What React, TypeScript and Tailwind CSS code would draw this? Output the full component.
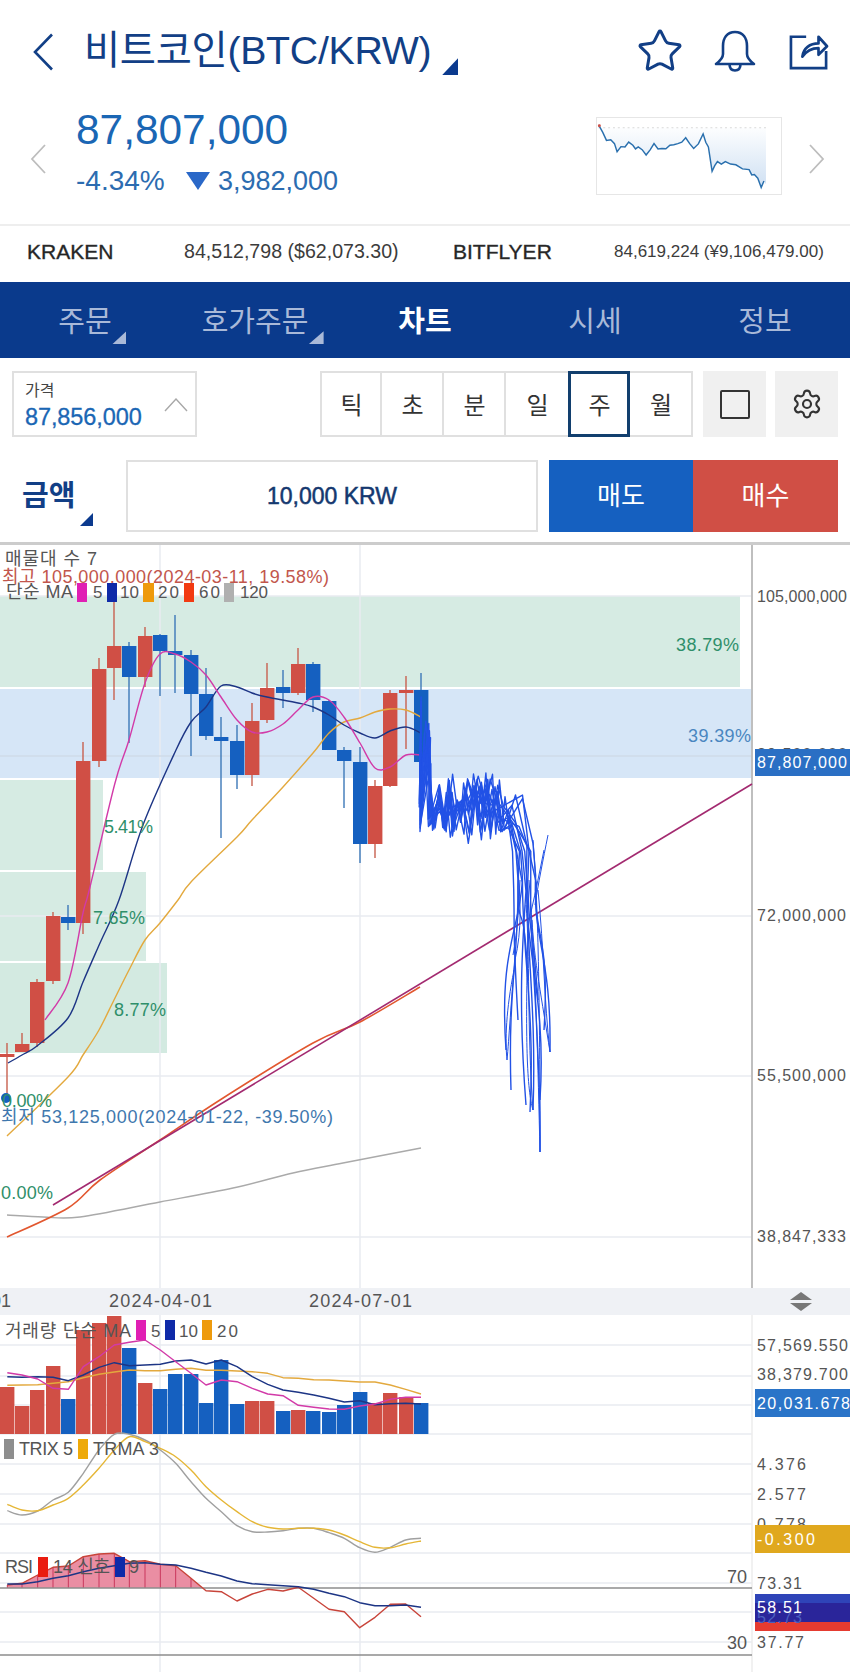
import { Settings, Star } from 'lucide-react';

const NAVY = '#123f86';
const RED = '#d04f45';
const BLUE = '#1560c0';

// x, body top, body bottom, wick top, wick bottom, up?
const candles: [number, number, number, number, number, boolean][] = [
  [7, 1054, 1057, 1043, 1098, true],
  [22, 1044, 1052, 1033, 1052, true],
  [37, 982, 1043, 979, 1047, true],
  [53, 916, 981, 912, 984, true],
  [68, 917, 923, 905, 930, false],
  [83, 761, 923, 742, 934, true],
  [99, 669, 761, 658, 767, true],
  [114, 646, 668, 597, 700, true],
  [129, 646, 677, 642, 743, false],
  [145, 636, 677, 627, 687, true],
  [160, 635, 651, 634, 696, false],
  [175, 651, 655, 615, 693, false],
  [191, 655, 694, 650, 756, false],
  [206, 694, 736, 668, 740, false],
  [221, 737, 741, 717, 838, false],
  [237, 741, 775, 725, 789, false],
  [252, 721, 775, 703, 786, true],
  [267, 688, 720, 663, 723, true],
  [283, 687, 693, 670, 708, false],
  [298, 664, 693, 648, 695, true],
  [313, 664, 700, 662, 712, false],
  [329, 701, 750, 700, 750, false],
  [344, 750, 761, 747, 808, false],
  [360, 762, 844, 747, 863, false],
  [375, 786, 844, 780, 858, true],
  [390, 693, 786, 690, 787, true],
  [406, 690, 693, 676, 749, true],
  [421, 690, 762, 673, 770, false],
];

const volumes = [1387, 1406, 1390, 1366, 1399, 1330, 1323, 1316, 1348, 1383, 1389, 1374, 1374, 1403, 1360, 1404, 1401, 1401, 1411, 1410, 1411, 1412, 1405, 1392, 1403, 1393, 1397, 1403];

const ma5 = '45,1020 68,983 83,913 90,887 115,783 129,740 145,683 160,654 175,654 191,662 206,675 221,697 237,720 252,732 267,732 283,724 298,710 313,697 329,700 344,717 360,743 375,768 390,767 406,755 421,755';
const ma10 = '8,1063 22,1055 37,1046 68,1018 83,982 100,943 119,900 143,825 176,750 191,722 206,707 221,686 237,687 252,693 267,697 298,703 313,707 329,715 344,725 360,733 375,738 390,731 406,727 421,733';
const ma20 = '7,1136 68,1077 83,1055 99,1030 114,1000 129,970 145,940 160,923 178,900 191,882 237,837 252,820 283,787 313,753 329,733 344,722 360,718 375,712 390,709 406,710 421,717';
const ma60 = '7,1237 68,1208 100,1180 160,1140 220,1100 313,1043 360,1022 420,987';
const ma120 = '7,1215 43,1217 80,1217 160,1202 233,1188 293,1173 343,1163 421,1148';

const xs = [22, 66, 113, 159, 205, 250, 297, 343, 388, 435, 481, 527, 573, 618, 664, 711, 757, 803, 849, 895, 941, 987, 1033, 1079, 1125, 1171, 1217, 1263];
const sub = (ys: number[]) => ys.map((y, i) => `${(xs[i] / 3).toFixed(1)},${(1280 + y / 3).toFixed(1)}`).join(' ');

const volMa5 = sub([278, 285, 297, 325, 328, 260, 230, 195, 187, 180, 210, 245, 280, 315, 300, 305, 325, 342, 347, 376, 382, 387, 388, 378, 372, 358, 352, 352]);
const volMa10 = sub([290, 292, 290, 292, 302, 285, 262, 248, 257, 255, 253, 243, 240, 252, 240, 260, 290, 313, 330, 337, 345, 355, 366, 362, 374, 371, 370, 372]);
const volMa20 = sub([316, 315, 314, 310, 305, 293, 283, 276, 270, 272, 272, 268, 265, 271, 271, 273, 275, 280, 293, 295, 299, 300, 303, 306, 306, 315, 328, 342]);
const trix = sub([692, 705, 693, 660, 637, 580, 510, 463, 463, 480, 510, 550, 605, 655, 695, 737, 755, 756, 752, 745, 745, 758, 775, 803, 817, 802, 780, 775]);
const trma = sub([673, 690, 692, 675, 655, 615, 565, 510, 470, 485, 505, 530, 570, 620, 660, 695, 725, 742, 747, 745, 745, 750, 765, 785, 802, 803, 792, 783]);
const rsiY = [915, 910, 885, 862, 858, 830, 822, 820, 845, 842, 853, 857, 895, 932, 935, 963, 942, 928, 933, 922, 955, 988, 995, 1043, 1012, 973, 972, 1010];
const rsi = sub(rsiY);
const signal = sub([912, 912, 905, 895, 887, 875, 865, 857, 850, 848, 853, 855, 865, 877, 888, 903, 911, 914, 917, 920, 928, 940, 950, 968, 977, 977, 975, 982]);
const rsiFill = `7,1588 ${sub(rsiY.slice(0, 13))} 203,1588`;

// catmull-rom through the given points
function smooth(points: string) {
  const p = points.split(' ').map((s) => s.split(',').map(Number));
  let d = `M${p[0][0]} ${p[0][1]}`;
  for (let i = 0; i < p.length - 1; i++) {
    const a = p[Math.max(i - 1, 0)];
    const b = p[i];
    const c = p[i + 1];
    const e = p[Math.min(i + 2, p.length - 1)];
    d += ` C${(b[0] + (c[0] - a[0]) / 6).toFixed(1)} ${(b[1] + (c[1] - a[1]) / 6).toFixed(1)} ${(c[0] - (e[0] - b[0]) / 6).toFixed(1)} ${(c[1] - (e[1] - b[1]) / 6).toFixed(1)} ${c[0]} ${c[1]}`;
  }
  return d;
}

// forecast lines, same seed every render
function seeded(seed: number) {
  let s = seed;
  return () => {
    s = (s * 16807) % 2147483647;
    return s / 2147483647;
  };
}

const fanEnds: [number, number, number][] = [
  [506, 1050, 1], [511, 1090, 1], [518, 1020, 0], [526, 1105, 2], [530, 1112, 2],
  [533, 1110, 3], [540, 1152, 4], [540, 1100, 3], [550, 1052, 5], [528, 980, 1], [538, 1000, 4], [544, 1030, 5],
];

const fanPaths = fanEnds.map(([ex, ey, k], i) => {
  const r = seeded(97 + i * 131);
  let d = `M${421 + r() * 8} ${692 + r() * 60}`;
  d += ` L${418 + r() * 10} ${790 + r() * 42} L${424 + r() * 8} ${720 + r() * 45} L${428 + r() * 8} ${815 + r() * 18}`;
  let x = 436 + r() * 4;
  while (x < 500) {
    const t = (x - 430) / 75;
    const top = 790 - 22 * Math.sin(Math.min(t * 2, 1) * 1.57) + 18 * Math.max(0, t - 0.5);
    const bottom = 832 + 12 * Math.sin(t * 3);
    d += ` L${x.toFixed(1)} ${(top + r() * (bottom - top) * 0.55).toFixed(1)}`;
    x += 3 + r() * 5;
    d += ` L${x.toFixed(1)} ${(top + (bottom - top) * (0.4 + r() * 0.6)).toFixed(1)}`;
    x += 3 + r() * 5;
  }
  const sx = 505 + k * 3.5;
  d += ` L${sx} ${795 + r() * 40} L${sx + 6 + r() * 6} ${838 + r() * 16} L${sx + 8 + r() * 6} ${875 + r() * 25}`;
  d += ` C${sx + 10} ${930 + r() * 30} ${ex + (r() - 0.5) * 16} ${ey - 100} ${ex} ${ey}`;
  return d;
});

const tailPaths = [
  'M517 860 C521 900 522 930 515 960 C511 1000 509 1040 507 1060 C505 1040 506 1010 514 970',
  'M526 905 C530 950 527 1030 533 1110 C527 1090 525 1040 528 930',
  'M533 840 C538 900 540 1000 540 1152 C538 1070 536 970 529 880',
  'M538 890 C544 950 544 1000 550 1052 C542 1000 534 960 532 920',
  'M535 905 C538 885 543 860 548 835',
  'M531 912 C536 890 540 870 544 850',
  'M520 880 C519 900 518 930 513 955',
];

function Tag({ x, y, children, fill = '#555555', len, size = 16 }: { x: number; y: number; children: string; fill?: string; len?: number; size?: number }) {
  return (
    <text x={x} y={y} fontSize={size} fill={fill} textLength={len} lengthAdjust="spacing">
      {children}
    </text>
  );
}

function Corner({ className }: { className: string }) {
  return <span className={`absolute [clip-path:polygon(100%_0,100%_100%,0_100%)] ${className}`} />;
}

const sparkRaw = [[1100, 372], [1108, 395], [1115, 420], [1123, 418], [1130, 430], [1135, 455], [1150, 440], [1157, 425], [1165, 435], [1175, 440], [1190, 465], [1205, 430], [1220, 445], [1235, 435], [1250, 430], [1265, 412], [1280, 445], [1298, 400], [1308, 440], [1315, 515], [1325, 485], [1340, 485], [1360, 495], [1385, 510], [1395, 525], [1408, 565], [1413, 545]];
const sparkNoise = seeded(4242);
const sparkPts = sparkRaw
  .flatMap(([x, y], i) => {
    const next = sparkRaw[i + 1];
    if (!next || next[0] - x < 10) return [`${(x / 1.845).toFixed(1)},${(y / 3).toFixed(1)}`];
    const midX = (x + next[0]) / 2 / 1.845;
    const midY = (y + next[1]) / 2 / 3 + (sparkNoise() - 0.5) * 6;
    return [`${(x / 1.845).toFixed(1)},${(y / 3).toFixed(1)}`, `${midX.toFixed(1)},${midY.toFixed(1)}`];
  })
  .join(' ');

export default function App() {
  return (
    <div className="w-[850px] h-[1672px] overflow-hidden bg-white [font-family:'Liberation_Sans','Noto_Sans_CJK_KR',sans-serif]">
      {/* Title */}
      <header className="h-[100px] flex items-center pl-[32px] pr-[21px] pt-[2px]">
        <svg viewBox="0 0 22 38" className="w-[22px] h-[38px] mt-[1px]" fill="none" stroke={NAVY} strokeWidth="2.6">
          <path d="M20 1.5 3 19l17 17.5" />
        </svg>
        <h1 className="relative ml-[30px] text-[39.3px] leading-none tracking-[-0.3px] text-[#123f86]">
          비트코인(BTC/KRW)
          <Corner className="left-[358px] top-[27px] w-[16px] h-[17px] bg-[#0b3a8e]" />
        </h1>
        <div className="ml-auto flex items-center">
          <Star size={48} strokeWidth={1.5} color={NAVY} className="mr-[30px]" />
          <svg viewBox="0 0 42 42" className="w-[42px] h-[42px] mr-[33px]" fill="none" stroke={NAVY} strokeWidth="2.6" strokeLinejoin="round">
            <path d="M21 2c-8 0-12 6-12 14v8c0 4-3 7-7 10h38c-4-3-7-6-7-10v-8c0-8-4-14-12-14Z" />
            <path d="M15.5 34c0 4 2 6.5 5.5 6.5s5.5-2.500 5.500-6.500" />
          </svg>
          <svg viewBox="0 0 42 40" className="w-[40px] h-[38px]" fill="none" stroke={NAVY} strokeWidth="2.8">
            <path d="M18 5H2v33h37V20" />
            <path d="M14 26c1-9 8-14 17-14V5l9 10-9 9v-7c-7 0-12 2-17 9Z" strokeLinejoin="round" />
          </svg>
        </div>
      </header>

      {/* Price */}
      <section className="relative h-[124px] pl-[76px]">
        <svg viewBox="0 0 16 30" className="absolute left-[30px] top-[44px] w-[16px] h-[30px]" fill="none" stroke="#bdbdbd" strokeWidth="1.8">
          <path d="M15 1 2 15l13 14" />
        </svg>
        <div className="pt-[6px] text-[42.4px] leading-[48px] text-[#1a66b4]">87,807,000</div>
        <div className="mt-[12px] flex items-center text-[28px] leading-[30px] text-[#2c6cb0]">
          <span className="w-[110px]">-4.34%</span>
          <span className="w-[24px] h-[18px] mr-[8px] bg-[#2a68c8] [clip-path:polygon(0_0,100%_0,50%_100%)]" />
          <span className="text-[27px]">3,982,000</span>
        </div>
        <svg viewBox="596 117 186 78" className="absolute left-[596px] top-[17px] w-[186px] h-[78px] border border-[#e6e6e6]">
          <defs>
            <linearGradient id="spark" x1="0" y1="0" x2="0" y2="1">
              <stop offset="0" stopColor="#ffffff" />
              <stop offset="1" stopColor="#cfe0f3" />
            </linearGradient>
          </defs>
          <polygon points={`596,127 768,127 768,185 ${sparkPts.split(' ').reverse().join(' ')}`} fill="url(#spark)" />
          <line x1="596" y1="127" x2="769" y2="127" stroke="#d8d8d8" strokeDasharray="2 3" />
          <polyline points={sparkPts} fill="none" stroke="#2a70ae" strokeWidth="1.5" />
          <circle cx="597" cy="125" r="1.5" fill="#d04f45" />
        </svg>
        <svg viewBox="0 0 16 30" className="absolute left-[809px] top-[44px] w-[16px] h-[30px]" fill="none" stroke="#bdbdbd" strokeWidth="1.8">
          <path d="M1 1l13 14L1 29" />
        </svg>
      </section>

      {/* Exchange prices */}
      <section className="h-[59px] pb-[6px] border-t-2 border-[#eeeeee] flex items-center pl-[27px] text-[#3c3c3c]">
        <span className="w-[157px] text-[21px] [-webkit-text-stroke:0.4px_#3c3c3c] text-[#222222]">KRAKEN</span>
        <span className="w-[269px] text-[19.6px]">84,512,798 ($62,073.30)</span>
        <span className="w-[161px] text-[21px] [-webkit-text-stroke:0.4px_#3c3c3c] text-[#222222]">BITFLYER</span>
        <span className="text-[17px]">84,619,224 (¥9,106,479.00)</span>
      </section>

      {/* Tabs */}
      <nav className="h-[76px] mt-[-1px] pt-[6px] bg-[#0a3a8c] grid grid-cols-5 text-[29px] text-[#a9b9d8]">
        <div className="flex items-center justify-center">
          <span className="relative">
            주문
            <Corner className="left-[54px] top-[30px] w-[14px] h-[13px] bg-[#a9b9d8]" />
          </span>
        </div>
        <div className="flex items-center justify-center">
          <span className="relative">
            호가주문
            <Corner className="left-[107px] top-[30px] w-[15px] h-[13px] bg-[#a9b9d8]" />
          </span>
        </div>
        <div className="flex items-center justify-center font-bold text-white">차트</div>
        <div className="flex items-center justify-center">시세</div>
        <div className="flex items-center justify-center">정보</div>
      </nav>

      {/* Chart controls */}
      <section className="h-[102px] flex pt-[13px] pl-[12px] pr-[12px]">
        <div className="relative w-[186px] h-[66px] border-2 border-[#e0e0e0] pl-[11px] pt-[9px]">
          <div className="text-[16px] leading-[18px] text-[#444444]">가격</div>
          <div className="mt-[5px] text-[23.5px] leading-[24px] text-[#1a66b4] tracking-[-0.1px] [-webkit-text-stroke:0.3px_#1a66b4]">87,856,000</div>
          <svg viewBox="0 0 24 14" className="absolute left-[150px] top-[25px] w-[24px] h-[14px]" fill="none" stroke="#a8a8a8" strokeWidth="1.4">
            <path d="M1 13 12 1l11 12" />
          </svg>
        </div>
        <div className="ml-[123px] flex h-[66px] border-2 border-[#e0e0e0] text-[24px] text-[#333333]">
          <div className="w-[60px] pt-[3px] flex items-center justify-center border-r-2 border-[#e0e0e0]">틱</div>
          <div className="w-[62px] pt-[3px] flex items-center justify-center border-r-2 border-[#e0e0e0]">초</div>
          <div className="w-[62px] pt-[3px] flex items-center justify-center border-r-2 border-[#e0e0e0]">분</div>
          <div className="w-[62px] pt-[3px] flex items-center justify-center">일</div>
          <div className="w-[62px] -my-[2px] pt-[3px] flex items-center justify-center border-[3px] border-[#123f6e]">주</div>
          <div className="w-[61px] pt-[3px] flex items-center justify-center">월</div>
        </div>
        <div className="ml-[10px] w-[63px] h-[66px] bg-[#f0f0f0] flex items-center justify-center">
          <span className="block w-[30px] h-[29px] border-2 border-[#333333] rounded-[2px]" />
        </div>
        <div className="ml-[9px] w-[63px] h-[66px] bg-[#f0f0f0] flex items-center justify-center">
          <Settings size={32} strokeWidth={1.6} color="#333333" />
        </div>
      </section>

      {/* Amount */}
      <section className="h-[82px] flex items-start pl-[22px] pr-[12px]">
        <div className="relative w-[104px] h-[72px] pt-[20px] text-[29px] leading-[32px] font-bold text-[#123f86]">
          금액
          <Corner className="left-[58px] top-[53px] w-[13px] h-[13px] bg-[#0b3a8e]" />
        </div>
        <div className="w-[412px] h-[72px] border-2 border-[#e0e0e0] flex items-center justify-center text-[23px] text-[#14386f] font-medium [-webkit-text-stroke:0.5px_#14386f]">
          10,000 KRW
        </div>
        <div className="ml-[11px] w-[144px] h-[72px] bg-[#1560c0] text-white text-[26px] flex items-center justify-center">매도</div>
        <div className="w-[145px] h-[72px] bg-[#d04f45] text-white text-[26px] flex items-center justify-center">매수</div>
      </section>

      {/* Chart */}
      <div className="h-[1130px] border-t-[3px] border-[#cccccc]">
        <svg viewBox="0 545 850 1127" className="block w-[850px] h-[1127px]">
          {/* panel bands */}
          <rect x="0" y="596" width="740" height="91" fill="#d6ebe3" />
          <rect x="0" y="689" width="751" height="89" fill="#d6e6f7" />
          <rect x="0" y="780" width="103" height="90" fill="#d6ebe3" />
          <rect x="0" y="872" width="146" height="89" fill="#d6ebe3" />
          <rect x="0" y="963" width="167" height="90" fill="#d3eae1" />

          {/* grid */}
          <g stroke="#e9ebf0" strokeWidth="1.5">
            <line x1="160" y1="545" x2="160" y2="1672" />
            <line x1="360" y1="545" x2="360" y2="1672" />
            <line x1="0" y1="596" x2="752" y2="596" />
            {[916, 1076, 1237, 1345, 1376, 1405, 1434, 1464, 1494, 1524, 1553, 1583, 1612, 1642].map((y) => (
              <line key={y} x1="0" y1={y} x2="752" y2={y} />
            ))}
          </g>
          <line x1="0" y1="756" x2="751" y2="756" stroke="#cfdbe8" strokeWidth="1.5" />
          <rect x="0" y="1288" width="850" height="27" fill="#eff1f5" />
          <line x1="752" y1="545" x2="752" y2="1288" stroke="#bfbfbf" strokeWidth="2" />
          <line x1="752" y1="1315" x2="752" y2="1672" stroke="#ececec" strokeWidth="1.5" />

          {/* candles */}
          {candles.map(([x, top, bottom, wt, wb, up]) => (
            <g key={x}>
              <line x1={x} y1={wt} x2={x} y2={wb} stroke={up ? '#c8604f' : '#3c78b8'} strokeWidth="1.4" />
              <rect x={x - 7} y={top} width="14.4" height={bottom - top} fill={up ? RED : BLUE} />
            </g>
          ))}

          {/* moving averages */}
          <g fill="none" strokeWidth="1.4" strokeLinejoin="round">
            <path d={smooth(ma20)} stroke="#e3a93e" />
            <path d={smooth(ma10)} stroke="#1d3585" />
            <path d={smooth(ma5)} stroke="#d23aa8" />
            <path d={smooth(ma120)} stroke="#aaaaaa" />
            <path d={smooth(ma60)} stroke="#e2572f" strokeWidth="1.6" />
            <line x1="53" y1="1205" x2="752" y2="784" stroke="#a32a70" strokeWidth="1.6" />
          </g>

          {/* forecast */}
          <g fill="none" stroke="#2252e6" strokeWidth="1.4" strokeLinejoin="round">
            {fanPaths.map((d, i) => (
              <path key={i} d={d} />
            ))}
            {tailPaths.map((d, i) => (
              <path key={i} d={d} strokeWidth="1" />
            ))}
          </g>
          <circle cx="6" cy="1098" r="5" fill="#1560c0" />

          {/* main legend */}
          <Tag x={5} y={565} size={18} len={92}>매물대 수 7</Tag>
          <Tag x={2} y={583} size={18} len={327} fill="#c2564c">최고 105,000,000(2024-03-11, 19.58%)</Tag>
          <Tag x={6} y={598} size={18} len={67}>단순 MA</Tag>
          <rect x="77" y="583" width="10" height="19" fill="#e01fb4" />
          <Tag x={93} y={598} size={17}>5</Tag>
          <rect x="107" y="583" width="10" height="19" fill="#0f2aa8" />
          <Tag x={120} y={598} size={17}>10</Tag>
          <rect x="143" y="583" width="11" height="19" fill="#ee9a0c" />
          <Tag x={158} y={598} size={17} len={21}>20</Tag>
          <rect x="184" y="583" width="10" height="19" fill="#f23a12" />
          <Tag x={199} y={598} size={17} len={21}>60</Tag>
          <rect x="224" y="583" width="10" height="19" fill="#b0b0b0" />
          <Tag x={240} y={598} size={17} len={28}>120</Tag>

          {/* band labels */}
          <Tag x={104} y={833} size={18} len={49} fill="#2f8f6a">5.41%</Tag>
          <Tag x={93} y={924} size={18} len={52} fill="#2f8f6a">7.65%</Tag>
          <Tag x={114} y={1016} size={18} len={52} fill="#2f8f6a">8.77%</Tag>
          <Tag x={2} y={1107} size={18} len={50} fill="#2f8f6a">0.00%</Tag>
          <Tag x={1} y={1123} size={18} len={332} fill="#3f78ae">최저 53,125,000(2024-01-22, -39.50%)</Tag>
          <Tag x={1} y={1199} size={18} len={52} fill="#2f8f6a">0.00%</Tag>
          <Tag x={676} y={651} size={18} len={63} fill="#2f8f6a">38.79%</Tag>
          <Tag x={688} y={742} size={18} len={63} fill="#4a86c0">39.39%</Tag>

          {/* price axis */}
          <Tag x={757} y={602} len={90}>105,000,000</Tag>
          <Tag x={757} y={760} len={90}>89,500,000</Tag>
          <rect x="755" y="749" width="95" height="27" fill="#2a6fc4" />
          <Tag x={757} y={768} len={90} fill="#ffffff">87,807,000</Tag>
          <Tag x={757} y={921} len={89}>72,000,000</Tag>
          <Tag x={757} y={1081} len={89}>55,500,000</Tag>
          <Tag x={757} y={1242} len={89}>38,847,333</Tag>

          {/* dates */}
          <Tag x={-9} y={1307} size={18}>01</Tag>
          <Tag x={109} y={1307} size={18} len={103}>2024-04-01</Tag>
          <Tag x={309} y={1307} size={18} len={103}>2024-07-01</Tag>
          <path d="M801 1292l11 8h-22zM790 1303h22l-11 8z" fill="#777777" />

          {/* volume */}
          {candles.map(([x, , , , , up], i) => (
            <rect key={x} x={x - 7} y={volumes[i]} width="14.4" height={1434 - volumes[i]} fill={up ? RED : BLUE} />
          ))}
          <g fill="none" strokeWidth="1.4" strokeLinejoin="round">
            <polyline points={volMa20} stroke="#e3a93e" />
            <polyline points={volMa10} stroke="#1d3585" />
            <polyline points={volMa5} stroke="#d23aa8" />
          </g>
          <Tag x={5} y={1337} size={18} len={126}>거래량 단순 MA</Tag>
          <rect x="136" y="1320" width="10" height="20" fill="#e01fb4" />
          <Tag x={151} y={1337} size={17}>5</Tag>
          <rect x="165" y="1320" width="10" height="20" fill="#0f2aa8" />
          <Tag x={179} y={1337} size={17}>10</Tag>
          <rect x="202" y="1320" width="10" height="20" fill="#ee9a0c" />
          <Tag x={217} y={1337} size={17} len={21}>20</Tag>
          <Tag x={757} y={1351} len={91}>57,569.550</Tag>
          <Tag x={757} y={1380} len={91}>38,379.700</Tag>
          <rect x="755" y="1389" width="95" height="28" fill="#2a74c8" />
          <Tag x={757} y={1409} len={93} fill="#ffffff">20,031.678</Tag>

          {/* TRIX */}
          <g fill="none" strokeWidth="1.4" strokeLinejoin="round">
            <path d={smooth(trix)} stroke="#a0a0a0" />
            <path d={smooth(trma)} stroke="#e5b636" />
          </g>
          <rect x="4" y="1439" width="10" height="20" fill="#8e8e8e" />
          <Tag x={19} y={1455} size={18} len={54}>TRIX 5</Tag>
          <rect x="78" y="1439" width="10" height="20" fill="#eeaa0a" />
          <Tag x={93} y={1455} size={18} len={66}>TRMA 3</Tag>
          <Tag x={757} y={1470} len={49}>4.376</Tag>
          <Tag x={757} y={1500} len={49}>2.577</Tag>
          <Tag x={757} y={1530} len={49}>0.778</Tag>
          <rect x="755" y="1525" width="95" height="28" fill="#e0a81e" />
          <Tag x={757} y={1545} len={58} fill="#ffffff">-0.300</Tag>

          {/* RSI */}
          <polygon points={rsiFill} fill="#ea8ea3" />
          {xs.slice(0, 13).map((x, i) => (
            <line key={x} x1={x / 3} y1={1280 + rsiY[i] / 3} x2={x / 3} y2="1588" stroke="#c9375c" strokeWidth="1" />
          ))}
          <line x1="0" y1="1588" x2="752" y2="1588" stroke="#8c8c8c" strokeWidth="1.5" />
          <line x1="0" y1="1655" x2="752" y2="1655" stroke="#8c8c8c" strokeWidth="1.5" />
          <g fill="none" strokeWidth="1.4" strokeLinejoin="round">
            <polyline points={rsi} stroke="#c8443a" />
            <polyline points={signal} stroke="#1d3585" />
          </g>
          <Tag x={5} y={1573} size={18} len={28}>RSI</Tag>
          <rect x="38" y="1557" width="10" height="20" fill="#ea1c10" />
          <Tag x={53} y={1573} size={18} len={57}>14 신호</Tag>
          <rect x="115" y="1557" width="10" height="20" fill="#0f2aa8" />
          <Tag x={129} y={1573} size={18}>9</Tag>
          <Tag x={727} y={1583} size={18} len={20}>70</Tag>
          <Tag x={727} y={1649} size={18} len={20}>30</Tag>
          <Tag x={757} y={1589} len={45}>73.31</Tag>
          <rect x="755" y="1603" width="95" height="28" fill="#e53b30" />
          <rect x="755" y="1594" width="95" height="28" fill="#2a259a" />
          <rect x="755" y="1594" width="95" height="9" fill="#2f44b8" />
          <Tag x={757} y={1623} len={45} fill="#4a5fc0">52.73</Tag>
          <Tag x={757} y={1613} len={45} fill="#ffffff">58.51</Tag>
          <Tag x={757} y={1648} len={47}>37.77</Tag>
        </svg>
      </div>
    </div>
  );
}
